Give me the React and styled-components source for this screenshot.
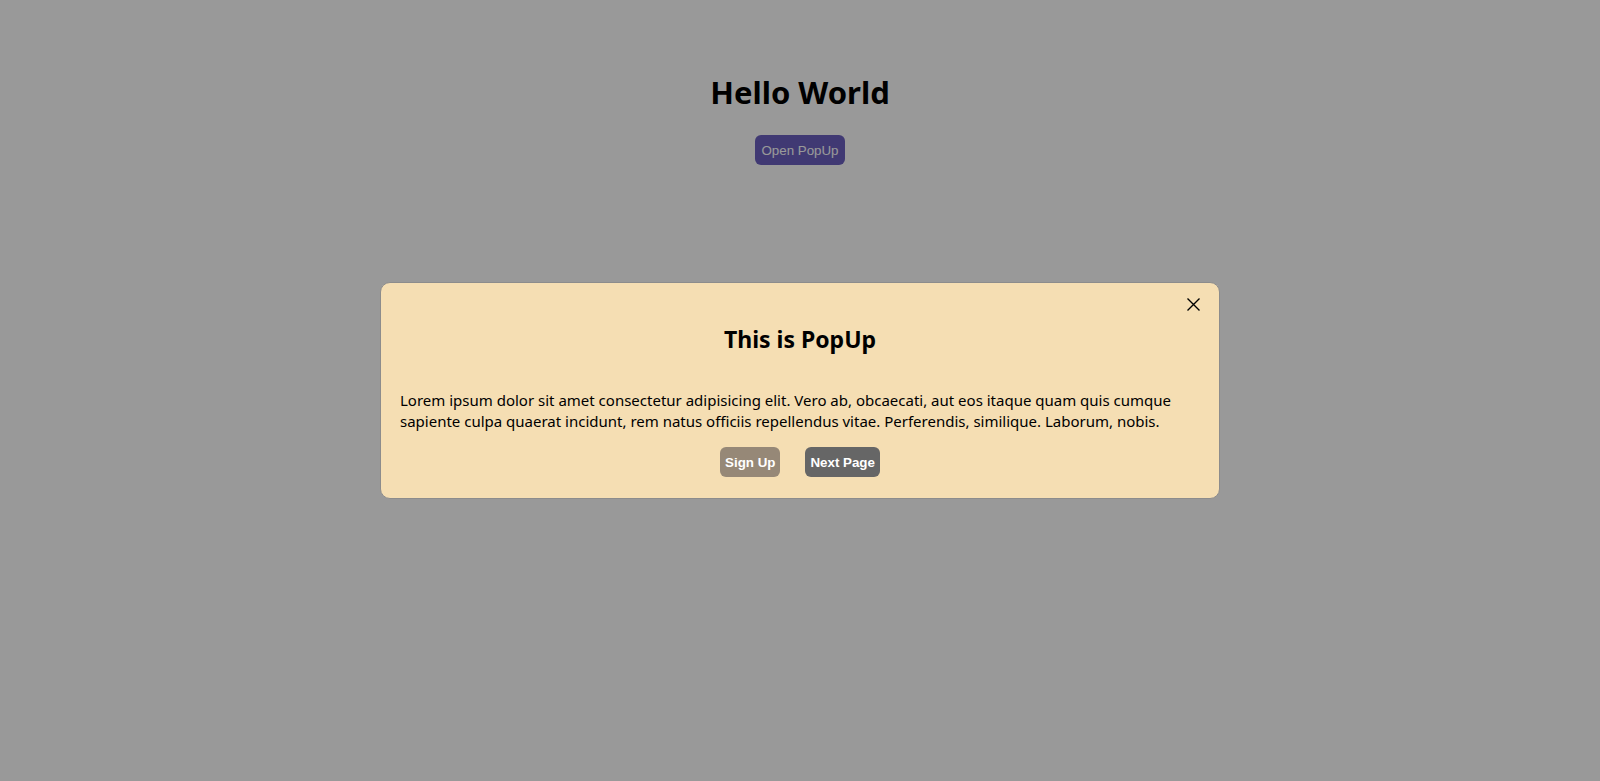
import React, { useState } from "react"
import styled, { createGlobalStyle } from "styled-components"

const GlobalStyle = createGlobalStyle`
  html, body {
    margin: 0;
    padding: 0;
    background: #ffffff;
    font-family: "Noto Sans", "Open Sans", sans-serif;
  }
`

const Page = styled.main`
  display: flex;
  flex-direction: column;
  align-items: center;
  padding-top: 72px;
  min-height: 781px;
  box-sizing: border-box;
`

const Title = styled.h1`
  margin: 0 0 23px;
  font-size: 31px;
  line-height: 40px;
  font-weight: 700;
  color: #000;
`

const Button = styled.button`
  height: 30px;
  padding: 0 ${props => props.$pad || 5}px;
  border: none;
  border-radius: 6px;
  background: ${props => props.$bg};
  color: #fff;
  font-family: "Liberation Sans", Arial, sans-serif;
  font-size: 13.33px;
  font-weight: ${props => (props.$bold ? 700 : 400)};
  cursor: pointer;
`

const Overlay = styled.div`
  position: fixed;
  inset: 0;
  background: rgba(0, 0, 0, 0.4);
  display: flex;
  align-items: center;
  justify-content: center;
`

const PopUp = styled.section`
  position: relative;
  box-sizing: border-box;
  width: 840px;
  padding: 0 19px 21px;
  background: #f5deb3;
  border: 1px solid #8c8c8c;
  border-radius: 10px;
  display: flex;
  flex-direction: column;
  align-items: center;
`

const PopTitle = styled.h2`
  margin: 40px 0 35px;
  font-size: 23px;
  line-height: 32px;
  font-weight: 700;
  color: #000;
`

const Text = styled.p`
  margin: 0 0 15px;
  align-self: stretch;
  font-size: 15px;
  line-height: 21px;
  color: #000;
`

const Actions = styled.div`
  display: flex;
  gap: 25px;
`

const Close = styled.button`
  position: absolute;
  top: 14px;
  right: 18px;
  width: 15px;
  height: 15px;
  padding: 0;
  border: none;
  background: transparent;
  display: flex;
  align-items: center;
  justify-content: center;
  cursor: pointer;
`

const App = () => {
  const [open, setOpen] = useState(true)

  return (
    <>
      <GlobalStyle />
      <Page>
        <Title>Hello World</Title>
        <Button $bg="#6c60c0" $pad={6.5} onClick={() => setOpen(true)}>
          Open PopUp
        </Button>
      </Page>
      {open && (
        <Overlay>
          <PopUp>
            <Close aria-label="close" onClick={() => setOpen(false)}>
              <svg width="15" height="15" viewBox="0 0 15 15">
                <path d="M1.5 1.5 L13.5 13.5 M13.5 1.5 L1.5 13.5" stroke="#000" strokeWidth="1.4" />
              </svg>
            </Close>
            <PopTitle>This is PopUp</PopTitle>
            <Text>
              Lorem ipsum dolor sit amet consectetur adipisicing elit. Vero ab, obcaecati, aut eos itaque quam quis
              cumque sapiente culpa quaerat incidunt, rem natus officiis repellendus vitae. Perferendis, similique.
              Laborum, nobis.
            </Text>
            <Actions>
              <Button $bg="#968877" $bold>Sign Up</Button>
              <Button $bg="#666666" $bold>Next Page</Button>
            </Actions>
          </PopUp>
        </Overlay>
      )}
    </>
  )
}

export default App
